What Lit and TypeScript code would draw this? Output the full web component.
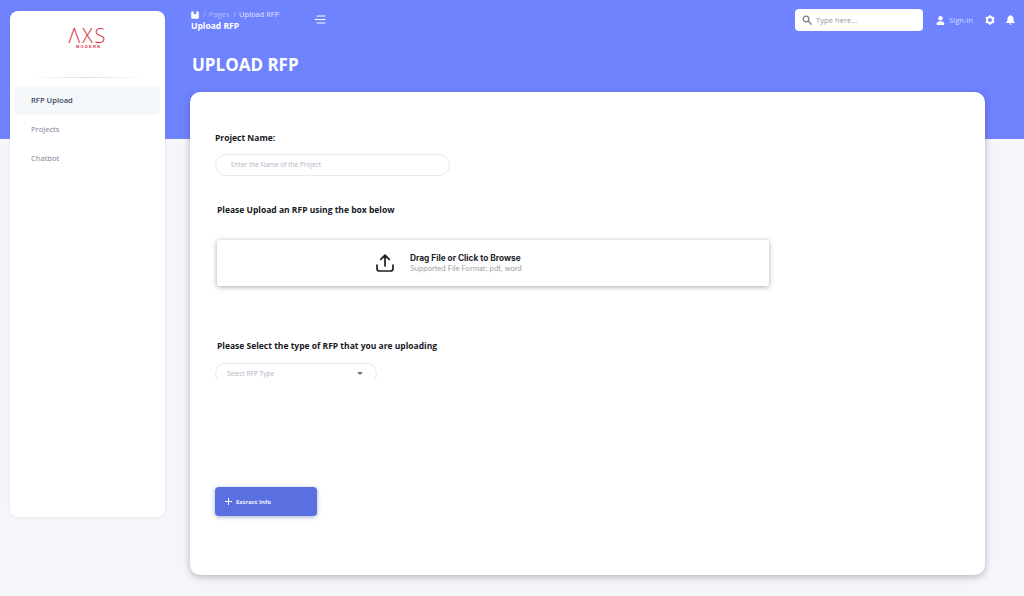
import { LitElement, html, css } from "lit";
import { customElement } from "lit/decorators.js";

@customElement("app-root")
export class AppRoot extends LitElement {
  static styles = css`
    :host {
      display: flex;
      width: 1024px;
      height: 596px;
      overflow: hidden;
      background: linear-gradient(#6f83ff 139px, #f5f6fa 139px);
      font-family: "Open Sans", sans-serif;
      color: #16181d;
    }
    * { box-sizing: border-box; }
    .sidebar {
      flex: none;
      width: 155px;
      height: 506px;
      margin: 11px 0 0 10px;
      padding: 0 5px 0 4px;
      background: #fff;
      border-radius: 8px;
      box-shadow: 0 0 3px rgba(60, 70, 120, 0.12);
      display: flex;
      flex-direction: column;
    }
    .logo {
      height: 66px;
      display: flex;
      justify-content: center;
      padding-top: 6px;
    }
    .logo svg { display: block; }
    .logo .mark {
      font-family: "Open Sans", sans-serif;
      font-weight: 300;
      font-size: 20px;
      fill: #d8303f;
    }
    .logo .sub {
      font-family: "Liberation Sans", sans-serif;
      font-size: 4px;
      font-weight: 700;
      fill: #d8303f;
    }
    .rule {
      height: 1px;
      margin: 0 16px 8px;
      background: linear-gradient(90deg, transparent, #dcdfe4 50%, transparent);
    }
    .item {
      height: 29px;
      padding: 0 0 2px 17px;
      display: flex;
      align-items: center;
      font-size: 7.6px;
      color: #7d8594;
      border-radius: 5px;
    }
    .item.active {
      background: #f5f8fb;
      color: #3c4a63;
      font-weight: 600;
    }
    .content {
      flex: none;
      width: 795px;
      margin-left: 25px;
      display: flex;
      flex-direction: column;
    }
    .topbar {
      height: 46px;
      display: flex;
      align-items: flex-start;
      color: #fff;
    }
    .crumbs-box {
      width: 124px;
      padding: 9px 0 0 1px;
    }
    .crumbs {
      display: flex;
      align-items: center;
      gap: 4px;
      font-size: 7.5px;
      line-height: 11px;
    }
    .crumbs .first { margin-left: -1px; }
    .crumbs .dim { opacity: 0.45; }
    .crumbs .mid { opacity: 0.8; margin-left: -1px; }
    .crumb-title {
      font-size: 8.5px;
      font-weight: 700;
      line-height: 12px;
    }
    .menu { margin-top: 15px; }
    .right {
      margin-left: auto;
      display: flex;
      align-items: center;
      height: 22px;
      margin-top: 9px;
      margin-right: -30px;
    }
    .search {
      width: 128px;
      height: 22px;
      background: #fff;
      border-radius: 4px;
      display: flex;
      align-items: center;
      gap: 4px;
      padding-left: 7px;
      font-size: 7.6px;
      color: #8d95a3;
    }
    .signin {
      display: flex;
      align-items: center;
      gap: 4px;
      margin-left: 13px;
      font-size: 7.6px;
      color: rgba(255, 255, 255, 0.7);
    }
    .gear { margin-left: 12px; }
    .bell { margin-left: 11px; }
    .page-title {
      height: 46px;
      padding: 9px 0 0 2px;
      font-size: 17px;
      line-height: 20px;
      font-weight: 700;
      color: #fff;
    }
    .card {
      height: 483px;
      background: #fff;
      border-radius: 10px;
      box-shadow: 0 2px 7px rgba(40, 45, 70, 0.32);
      padding: 39px 0 0 25px;
      display: flex;
      flex-direction: column;
      align-items: flex-start;
    }
    .label {
      font-size: 8.5px;
      line-height: 13px;
      font-weight: 700;
      color: #16181d;
    }
    .label.inset { margin-left: 2px; }
    .label.upload { margin-top: 27px; }
    .label.type { margin-top: 53px; }
    .input {
      width: 235px;
      height: 22px;
      margin-top: 10px;
      padding: 0 0 1px 15px;
      display: flex;
      align-items: center;
      border: 1px solid #e8eaed;
      border-radius: 11px;
      font-size: 6.5px;
      color: #aeb5c3;
    }
    .drop {
      width: 552px;
      height: 46px;
      margin: 24px 0 0 2px;
      padding-left: 158px;
      display: flex;
      align-items: center;
      gap: 15px;
      border-radius: 2px;
      box-shadow: 0 1px 5px rgba(30, 30, 40, 0.38);
    }
    .drop-main {
      font-family: "Inter", sans-serif;
      font-size: 8.3px;
      line-height: 11px;
      font-weight: 700;
      color: #20222a;
    }
    .drop-sub {
      font-family: "Inter", sans-serif;
      font-size: 7.2px;
      line-height: 10px;
      color: #9a9da3;
    }
    .select {
      width: 162px;
      height: 21px;
      margin-top: 11px;
      padding: 0 13px 0 11px;
      display: flex;
      align-items: center;
      justify-content: space-between;
      border: 1px solid #e8eaed;
      border-bottom-color: transparent;
      border-radius: 11px;
      font-size: 6.5px;
      color: #aeb5c3;
    }
    .caret {
      width: 0;
      height: 0;
      border-left: 3px solid transparent;
      border-right: 3px solid transparent;
      border-top: 3px solid #6b7280;
    }
    .btn {
      width: 102px;
      height: 29px;
      margin-top: 103px;
      padding-left: 10px;
      display: flex;
      align-items: center;
      gap: 4px;
      background: #5a6fe0;
      border-radius: 4px;
      box-shadow: 0 1px 4px rgba(60, 70, 140, 0.45);
      color: #f2f4ff;
      font-size: 6px;
      font-weight: 700;
    }
  `;

  render() {
    return html`
      <aside class="sidebar">
        <div class="logo">
          <svg width="44" height="40" viewBox="0 0 44 40">
            <text class="mark" x="3.500" y="26" textLength="37" lengthAdjust="spacing">ΛXS</text>
            <text class="sub" x="11" y="31" textLength="24" lengthAdjust="spacing">MODERN</text>
          </svg>
        </div>
        <div class="rule"></div>
        <div class="item active">RFP Upload</div>
        <div class="item">Projects</div>
        <div class="item">Chatbot</div>
      </aside>
      <main class="content">
        <header class="topbar">
          <div class="crumbs-box">
            <div class="crumbs">
              <svg width="8" height="8" viewBox="0 0 8 8" fill="#fff"><path d="M1 .5h1.6v1.6a1.4 1.4 0 0 0 2.8 0V.5H7a.8.8 0 0 1 .8.8v5.600a.8.8 0 0 1-.8.8H1a.8.8 0 0 1-.8-.8V1.300A.8.8 0 0 1 1 .5z"/></svg>
              <span class="dim">/</span><span class="dim first">Pages</span><span class="dim">/</span><span class="mid">Upload RFP</span>
            </div>
            <div class="crumb-title">Upload RFP</div>
          </div>
          <svg class="menu" width="12" height="9" viewBox="0 0 12 9" stroke="#fff" stroke-width="1.1" stroke-linecap="round"><path d="M3 1h8M1 4.500h10M3 8h8"/></svg>
          <div class="right">
            <div class="search">
              <svg width="10" height="10" viewBox="0 0 10 10" fill="none" stroke="#7d7f85" stroke-width="1.3" stroke-linecap="round"><circle cx="4" cy="4" r="2.900"/><path d="M6.300 6.300 9.200 9.200"/></svg>
              <span>Type here...</span>
            </div>
            <div class="signin">
              <svg width="9" height="9" viewBox="0 0 9 9" fill="#fff"><circle cx="4.500" cy="2.300" r="2.200"/><path d="M.8 9V7.200C.8 5.900 2.500 5.200 4.500 5.200s3.700.7 3.700 2V9z"/></svg>
              <span>Sign-in</span>
            </div>
            <svg class="gear" width="10" height="10" viewBox="0 0 10 10"><circle cx="5" cy="5" r="2.900" fill="none" stroke="#fff" stroke-width="2"/><path stroke="#fff" stroke-width="1.500" d="M5 0v2M5 8v2M.7 2.500l1.700 1M7.600 6.500l1.700 1M.7 7.500l1.700-1M7.600 3.500l1.700-1"/></svg>
            <svg class="bell" width="9" height="10" viewBox="0 0 9 10" fill="#fff"><path d="M4.500 0a.8.8 0 0 1 .8.8C6.800 1.200 7.500 2.400 7.500 4c0 1.800.5 2.600 1.300 3.300v.6H.2v-.6C1 6.600 1.500 5.800 1.500 4c0-1.600.7-2.800 2.200-3.200A.8.8 0 0 1 4.500 0zM3.300 8.600h2.400a1.200 1.200 0 0 1-2.400 0z"/></svg>
          </div>
        </header>
        <div class="page-title">UPLOAD RFP</div>
        <section class="card">
          <div class="label">Project Name:</div>
          <div class="input">Enter the Name of the Project</div>
          <div class="label inset upload">Please Upload an RFP using the box below</div>
          <div class="drop">
            <svg width="20" height="20" viewBox="0 0 20 20" fill="none" stroke="#1c1e24" stroke-width="1.700" stroke-linecap="round" stroke-linejoin="round"><path d="M10 13V2.500M5.800 6.400 10 2.200l4.200 4.200M2 12v3.500A2.500 2.500 0 0 0 4.500 18h11a2.500 2.500 0 0 0 2.500-2.500V12"/></svg>
            <div>
              <div class="drop-main">Drag File or Click to Browse</div>
              <div class="drop-sub">Supported File Format: pdf, word</div>
            </div>
          </div>
          <div class="label inset type">Please Select the type of RFP that you are uploading</div>
          <div class="select"><span>Select RFP Type</span><span class="caret"></span></div>
          <div class="btn">
            <svg width="7" height="7" viewBox="0 0 7 7" stroke="#fff" stroke-width="1"><path d="M3.500 0v7M0 3.500h7"/></svg>
            <span>Extract Info</span>
          </div>
        </section>
      </main>
    `;
  }
}
